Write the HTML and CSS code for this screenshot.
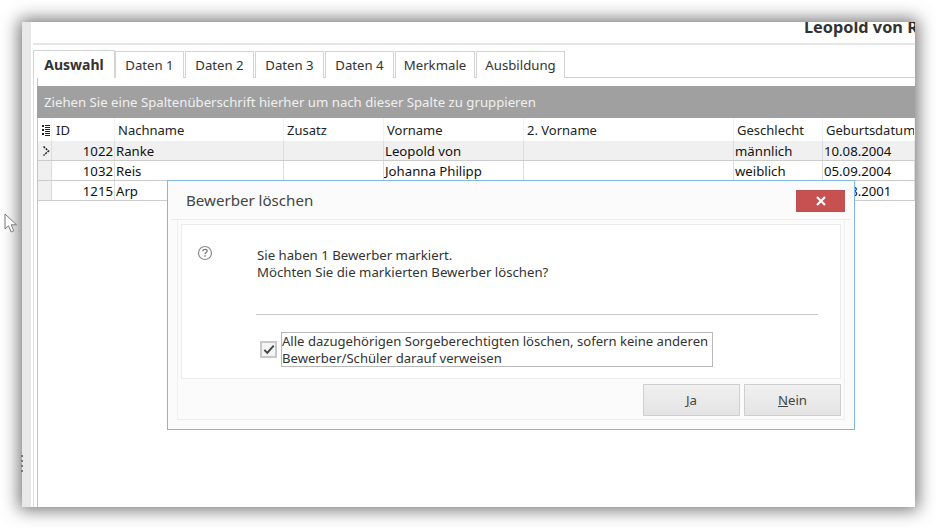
FILE: index.html
```html
<!DOCTYPE html>
<html lang="de">
<head>
<meta charset="utf-8">
<title>Bewerber löschen</title>
<link rel="stylesheet" href="styles.css">
</head>
<body>
<svg class="cursor" width="14" height="20" viewBox="0 0 14 20"><path d="M1 1V16L4.5 12.8L7.2 19L9.8 17.8L7.2 11.8H12.5Z" fill="#fff" stroke="#777" stroke-width="1"/></svg>
<div class="grip"><i></i><i></i><i></i><i></i></div>
<div class="window">
  <div class="strip"></div>
  <div class="main">
    <header class="top"><span class="person">Leopold von Ranke</span></header>
    <nav class="tabs">
      <span class="tab active">Auswahl</span>
      <span class="tab t1">Daten 1</span>
      <span class="tab t1">Daten 2</span>
      <span class="tab t1">Daten 3</span>
      <span class="tab t1">Daten 4</span>
      <span class="tab t2">Merkmale</span>
      <span class="tab t3">Ausbildung</span>
    </nav>
    <section class="panel">
      <div class="groupbar">Ziehen Sie eine Spaltenüberschrift hierher um nach dieser Spalte zu gruppieren</div>
      <div class="row head">
        <div class="ind"><svg width="10" height="12" viewBox="0 0 10 12"><path d="M1 1h2v2h-2zM1 5h2v2h-2zM1 9h2v2h-2zM4 1h5v1h-5zM4 3h5v1h-5zM4 5h5v1h-5zM4 7h5v1h-5zM4 9h5v1h-5zM4 11h5v1h-5z" fill="#222"/></svg></div>
        <div class="idh">ID</div><div>Nachname</div><div>Zusatz</div><div>Vorname</div><div>2. Vorname</div><div>Geschlecht</div><div>Geburtsdatum</div>
      </div>
      <div class="row data current">
        <div class="ind"><svg width="8" height="12" viewBox="0 0 8 12"><path d="M1.5 1.5L6.5 6L1.5 10.500" fill="none" stroke="#222" stroke-width="1.500" stroke-dasharray="2 1"/></svg></div>
        <div class="num">1022</div><div>Ranke</div><div></div><div>Leopold von</div><div></div><div>männlich</div><div>10.08.2004</div>
      </div>
      <div class="row data">
        <div class="ind"></div>
        <div class="num">1032</div><div>Reis</div><div></div><div>Johanna Philipp</div><div></div><div>weiblich</div><div>05.09.2004</div>
      </div>
      <div class="row data">
        <div class="ind"></div>
        <div class="num">1215</div><div>Arp</div><div></div><div></div><div></div><div></div><div>03.08.2001</div>
      </div>
    </section>
  </div>
  <div class="dialog">
    <div class="dlg-title">
      <span>Bewerber löschen</span>
      <button class="close" aria-label="Schließen"><svg width="10" height="10" viewBox="0 0 10 10"><path d="M1 1L9 9M9 1L1 9" stroke="#fff" stroke-width="2.200"/></svg></button>
    </div>
    <div class="dlg-frame">
      <div class="dlg-body">
        <div class="msg-row">
          <svg class="q" width="16" height="16" viewBox="0 0 16 16"><circle cx="8" cy="8" r="6.500" fill="none" stroke="#8a8a8a" stroke-width="1.200"/><path d="M5.800 6.300C5.800 4.900 6.800 4.300 8 4.300C9.300 4.300 10.200 5 10.200 6.100C10.200 7.500 8 7.600 8 9.300" fill="none" stroke="#777" stroke-width="1.200"/><rect x="7.300" y="10.300" width="1.400" height="1.400" fill="#777"/></svg>
          <p class="msg">Sie haben 1 Bewerber markiert.<br>Möchten Sie die markierten Bewerber löschen?</p>
        </div>
        <div class="sep"></div>
        <div class="check-row">
          <span class="box"><svg width="14" height="12" viewBox="0 0 14 12"><path d="M1.500 6.500L5 10L12.500 1.500" fill="none" stroke="#444" stroke-width="2.200"/></svg></span>
          <span class="label">Alle dazugehörigen Sorgeberechtigten löschen, sofern keine anderen<br>Bewerber/Schüler darauf verweisen</span>
        </div>
      </div>
      <div class="buttons">
        <button class="btn"><u>J</u>a</button>
        <button class="btn"><u>N</u>ein</button>
      </div>
    </div>
  </div>
</div>
</body>
</html>
```
FILE: styles.css
```css
* { box-sizing: border-box; }
html, body { margin: 0; height: 100%; overflow: hidden; background: #fff; }
body {
  position: relative;
  padding: 22px 21px 21px 22px;
  font-family: "Noto Sans", "Liberation Sans", sans-serif;
  font-size: 13.2px;
  color: #222;
}
.cursor { position: absolute; left: 4px; top: 213px; }
.grip { position: absolute; left: 21px; top: 455px; z-index: 2; display: flex; flex-direction: column; gap: 3px; }
.grip i { display: block; width: 2px; height: 2px; background: #777; }
.window {
  position: relative;
  display: flex;
  height: 485px;
  background: #fff;
  overflow: hidden;
}
body::before {
  content: "";
  position: absolute;
  left: 22px; top: 22px; width: 893px; height: 485px;
  box-shadow: 0 0 16px 3px rgba(0,0,0,.55);
}
.strip { width: 9px; background: #e8e8e8; flex: none; }
.main { flex: 1; min-width: 0; padding-left: 2px; display: flex; flex-direction: column; }
.top {
  height: 23px;
  margin-bottom: 5px;
  border-bottom: 2px solid #e6e6e6;
  white-space: nowrap;
  padding: 0 0 0 771px;
  flex: none;
}
.person { font-size: 16.3px; font-weight: 700; color: #333; line-height: 10px; display: block; }
.tabs { display: flex; height: 28px; border-bottom: 1px solid #d0d0d0; flex: none; gap: 1px; }
.tab {
  height: 27px;
  margin-top: 1px;
  border: 1px solid #d4d4d4;
  border-bottom: 0;
  color: #333;
  line-height: 26px;
  text-align: center;
  background: #fff;
  flex: none;
}
.tab.active { width: 82px; height: 28px; margin-top: 0; margin-right: -1px; font-size: 14px; font-weight: 700; line-height: 28px; position: relative; }
.tab.t1 { width: 69px; }
.tab.t2 { width: 80px; }
.tab.t3 { width: 89px; }
.panel {
  flex: 1;
  border-left: 1px solid #ddd;
  padding: 8px 0 0 3px;
  position: relative;
  background: #fff;
}
.panel::before { content: ""; position: absolute; left: 3px; top: 0; bottom: 0; width: 1px; background: #c4c4c4; }
.groupbar {
  position: relative;
  height: 32px;
  background: #a0a0a0;
  color: #f0f0f0;
  line-height: 33px;
  padding-left: 7px;
  white-space: nowrap;
}
.row {
  position: relative;
  display: grid;
  grid-template-columns: 14px 63px 169px 100px 140px 210px 89px 92px;
  margin-left: 1px;
  white-space: nowrap;
  color: #111;
}
.row > div { overflow: hidden; }
.head { height: 23px; line-height: 24px; font-size: 13px; color: #222; }
.head > div { padding-left: 3px; border-right: 1px solid #f2f2f2; }
.head > .idh { padding-left: 4px; }
.head > .ind { padding: 6px 0 0 3px; line-height: 0; background: #fff; }
.data { height: 20px; line-height: 20px; border-bottom: 1px solid #ccc; }
.data > div { padding-left: 1px; border-right: 1px solid #ddd; }
.data > .ind { background: #f0f0f0; padding: 4px 0 0 4px; line-height: 0; }
.data > .num { text-align: right; padding: 0 1px 0 0; }
.current { background: #f0f0f0; }
.dialog {
  position: absolute;
  left: 145px;
  top: 158px;
  width: 688px;
  height: 250px;
  background: #fbfbfb;
  border: 1px solid #7fb8e6;
  z-index: 1;
  display: flex;
  flex-direction: column;
  padding: 0 3px 9px;
}
.dlg-title {
  height: 39px;
  flex: none;
  display: flex;
  align-items: flex-start;
  justify-content: space-between;
  padding: 9px 6px 0 15px;
  border-bottom: 1px solid #ececec;
  font-size: 15.1px;
  line-height: 21px;
  color: #444;
}
.close {
  width: 49px;
  height: 22px;
  padding: 0;
  border: 1px solid #bb5050;
  background: #c75050;
  display: flex;
  align-items: center;
  justify-content: center;
}
.dlg-frame {
  flex: 1;
  margin: 0 6px;
  border-left: 1px solid #f0f0f0;
  border-right: 1px solid #f0f0f0;
  border-bottom: 1px solid #eee;
  padding: 4px 3px 3px;
  display: flex;
  flex-direction: column;
}
.dlg-body {
  height: 155px;
  background: #fff;
  border: 1px solid #ededed;
  padding: 20px 22px 0 15px;
  flex: none;
}
.msg-row { display: flex; height: 69px; }
.q { flex: none; margin-right: 44px; }
.msg { margin: 2px 0 0; line-height: 17px; color: #333; white-space: nowrap; }
.sep { height: 1px; background: #c8c8c8; margin-left: 59px; }
.check-row { display: flex; align-items: center; margin: 17px 0 0 63px; height: 35px; }
.box {
  width: 17px;
  height: 17px;
  border: 2px solid #c8c8c8;
  background: #f4f4f4;
  display: flex;
  align-items: center;
  justify-content: center;
  margin: 0 4px 0 0;
}
.box svg { width: 12px; height: 11px; }
.label {
  width: 432px;
  height: 35px;
  border: 1px solid #b8b8b8;
  font-size: 13.1px;
  line-height: 17px;
  color: #333;
  white-space: nowrap;
  overflow: hidden;
}
.buttons { display: flex; justify-content: flex-end; gap: 4px; margin-top: 5px; }
.btn {
  width: 97px;
  height: 32px;
  border: 1px solid #cfcfcf;
  background: linear-gradient(#f0f0f0, #e4e4e4);
  font: 13.2px "Noto Sans", "Liberation Sans", sans-serif;
  color: #444;
  padding: 0;
}
```
